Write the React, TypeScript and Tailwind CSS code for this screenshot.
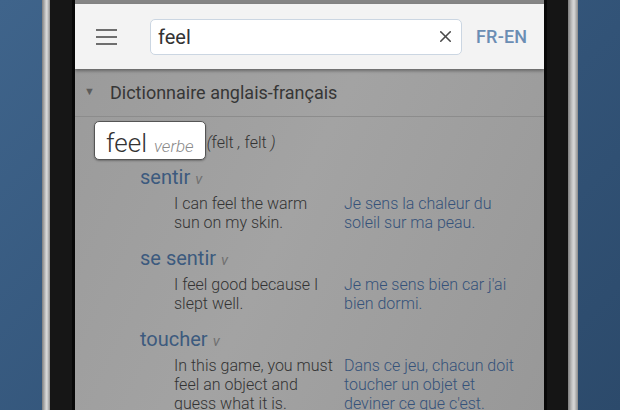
import { X } from "lucide-react";

type Sense = {
  word: string;
  en: string[];
  fr: string[];
};

const senses: Sense[] = [
  {
    word: "sentir",
    en: ["I can feel the warm", "sun on my skin."],
    fr: ["Je sens la chaleur du", "soleil sur ma peau."],
  },
  {
    word: "se sentir",
    en: ["I feel good because I", "slept well."],
    fr: ["Je me sens bien car j'ai", "bien dormi."],
  },
  {
    word: "toucher",
    en: ["In this game, you must", "feel an object and", "guess what it is."],
    fr: ["Dans ce jeu, chacun doit", "toucher un objet et", "deviner ce que c'est."],
  },
];

export default function App() {
  return (
    <div
      className="w-[620px] h-[410px] overflow-hidden flex bg-[linear-gradient(135deg,#3f648b_0%,#34567b_50%,#2c4a6b_100%)]"
      style={{ fontFamily: "Roboto, 'Noto Sans', sans-serif" }}
    >
      {/* left device edge */}
      <div className="w-[42px] shrink-0" />
      <div className="w-[8px] shrink-0 bg-[linear-gradient(90deg,#7d7d7d,#c9c9c9_45%,#dcdcdc_60%,#8f8f8f)]" />
      <div className="w-[25px] shrink-0 bg-[#161616] border-r-[3px] border-[#080808]" />

      {/* screen */}
      <div className="w-[469px] shrink-0 flex flex-col bg-[#9d9d9d] overflow-hidden">
        <div className="h-[4px] shrink-0 bg-[#858585]" />
        <header className="h-[65px] shrink-0 bg-[#f3f3f3] flex items-center shadow-[0_2px_3px_rgba(0,0,0,0.35)] relative z-10">
          <div className="w-[75px] pl-[21px]">
            <div className="flex flex-col gap-[5px]">
              <span className="block w-[21px] h-[2px] bg-[#6e6e6e]" />
              <span className="block w-[21px] h-[2px] bg-[#6e6e6e]" />
              <span className="block w-[21px] h-[2px] bg-[#6e6e6e]" />
            </div>
          </div>
          <div className="w-[312px] h-[36px] bg-white border border-[#cbd6e2] rounded-[5px] flex items-center pl-[7px] pr-[6px]">
            <span className="flex-1 text-[20px] text-[#333] leading-none">feel</span>
            <X size={19} strokeWidth={2} className="text-[#4a4a4a]" />
          </div>
          <span className="ml-[14px] text-[18px] font-medium text-[#6b8db3] tracking-[0.2px]">FR-EN</span>
        </header>

        <main className="flex-1 min-h-0 bg-[linear-gradient(115deg,#9b9b9b_0%,#a3a3a3_45%,#a0a0a0_60%,#989898_100%)]">
          <div className="h-[48px] flex items-center border-b border-[#8c8c8c]">
            <span className="w-[35px] pl-[9px] text-[11px] text-[#5c5c5c]">▼</span>
            <span className="text-[18px] text-[#363636]">Dictionnaire anglais-français</span>
          </div>

          <div className="flex items-center pl-[19px] mt-[4px]">
            <div className="h-[39px] bg-white border border-[#555] rounded-[5px] flex items-baseline pl-[11px] pr-[11px] pt-[2px] shadow-[0_1px_2px_rgba(0,0,0,0.3)]">
              <span className="text-[26px] font-light text-[#333]">feel</span>
              <span className="ml-[7px] text-[17px] font-light italic text-[#8a8a8a]">verbe</span>
            </div>
            <span className="ml-[1px] mt-[4px] text-[16px] font-light text-[#333]">
              <span className="italic">(</span>felt <span className="italic">,</span> felt <span className="italic">)</span>
            </span>
          </div>

          {senses.map((s, i) => (
            <div key={s.word} className={i === 0 ? "mt-[5px]" : "mt-[14px]"}>
              <div className="pl-[65px] h-[24px] flex items-baseline">
                <span className="text-[20px] text-[#3c5a7e] leading-[24px]">{s.word}</span>
                <span className="ml-[5px] text-[15px] italic text-[#707070]">v</span>
              </div>
              <div className="flex pl-[99px] mt-[5px] text-[16px] leading-[19px] font-light">
                <div className="w-[170px] text-[#333]">
                  {s.en.map((l) => (
                    <div key={l}>{l}</div>
                  ))}
                </div>
                <div className="w-[180px] text-[#35527a]">
                  {s.fr.map((l) => (
                    <div key={l}>{l}</div>
                  ))}
                </div>
              </div>
            </div>
          ))}
        </main>
      </div>

      {/* right device edge */}
      <div className="w-[24px] shrink-0 bg-[#151515] border-l-[3px] border-[#080808]" />
      <div className="w-[10px] shrink-0 bg-[linear-gradient(90deg,#7d7d7d,#c4c4c4_40%,#d8d8d8_60%,#8a8a8a)]" />
      <div className="flex-1" />
    </div>
  );
}
